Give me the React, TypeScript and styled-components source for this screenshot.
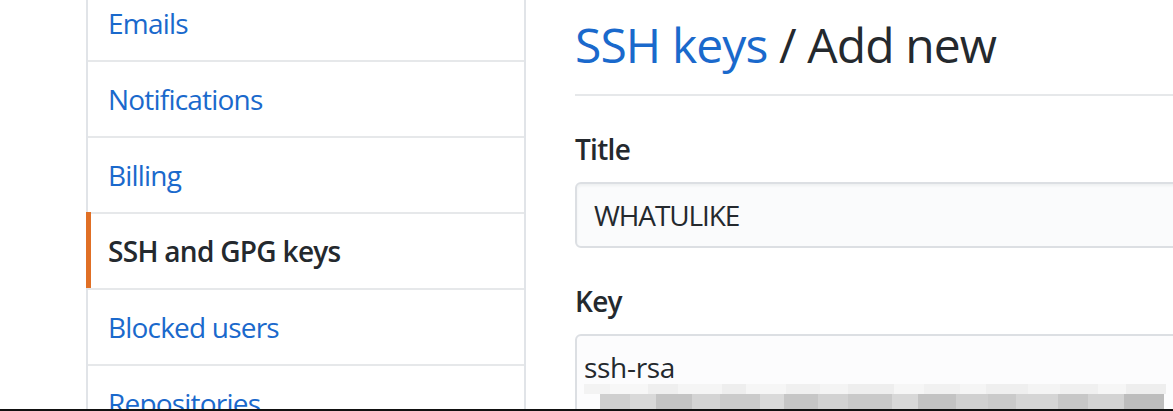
import React from "react";
import styled, { createGlobalStyle } from "styled-components";

const GlobalStyle = createGlobalStyle`
  html, body {
    margin: 0;
    padding: 0;
    background: #ffffff;
  }
  body {
    font-family: "Open Sans", "Noto Sans", "Liberation Sans", sans-serif;
    color: #24292e;
  }
  * { box-sizing: border-box; }
`;

const Page = styled.div`
  height: 411px;
  display: flex;
  flex-direction: column;
  overflow: hidden;
  background: #ffffff;
`;

const Content = styled.div`
  flex: 1;
  min-height: 0;
  display: flex;
  align-items: flex-start;
  padding-left: 86px;
  overflow: hidden;
`;

const BottomRule = styled.div`
  height: 2px;
  flex-shrink: 0;
  background: #111111;
`;

const Sidebar = styled.nav`
  flex-shrink: 0;
  width: 440px;
  margin-top: -16px;
  border-left: 2px solid #e1e4e8;
  border-right: 2px solid #e1e4e8;
  display: flex;
  flex-direction: column;
`;

const MenuItem = styled.a<{ $active?: boolean }>`
  position: relative;
  display: flex;
  align-items: center;
  height: 76px;
  padding-left: 20px;
  border-top: 2px solid #e6e8ea;
  font-size: 28px;
  letter-spacing: ${(p) => (p.$active ? "-0.7px" : "-0.8px")};
  font-weight: ${(p) => (p.$active ? 600 : 400)};
  color: ${(p) => (p.$active ? "#24292e" : "#1a69cc")};
  text-decoration: none;
  cursor: pointer;

  ${(p) =>
    p.$active &&
    `
    &::before {
      content: "";
      position: absolute;
      left: -2px;
      top: -2px;
      bottom: 0;
      width: 5px;
      background: #e06f25;
    }
  `}
`;

const Main = styled.main`
  flex-shrink: 0;
  width: 760px;
  margin-left: 49px;
  display: flex;
  flex-direction: column;
`;

const Subhead = styled.div`
  padding-top: 15px;
  padding-bottom: 19px;
  border-bottom: 2px solid #e6e8ea;
`;

const Heading = styled.h2`
  margin: 0;
  font-size: 48px;
  line-height: 60px;
  font-weight: 400;
  letter-spacing: -0.9px;
  color: #24292e;
`;

const HeadLink = styled.a`
  color: #1a69cc;
  text-decoration: none;
`;

const Form = styled.form`
  display: flex;
  flex-direction: column;
  padding-top: 32px;
`;

const Group = styled.div`
  display: flex;
  flex-direction: column;
  & + & {
    margin-top: 32px;
  }
`;

const Label = styled.label`
  font-size: 28px;
  line-height: 42px;
  font-weight: 600;
  letter-spacing: -0.7px;
  margin-bottom: 12px;
  color: #24292e;
`;

const Field = styled.div`
  height: 66px;
  border: 2px solid #dcdfe3;
  border-radius: 6px;
  background: #fafbfc;
  padding: 10px 17px;
  font-size: 28px;
  line-height: 42px;
  letter-spacing: -1.1px;
  color: #24292e;
  box-shadow: inset 0 2px 3px rgba(27, 31, 35, 0.05);
`;

const KeyField = styled.div`
  height: 120px;
  border: 2px solid #dcdfe3;
  border-radius: 6px;
  background: #fcfcfd;
  padding: 10px 0 0 7px;
  font-size: 28px;
  line-height: 42px;
  letter-spacing: -0.3px;
  color: #24292e;
  overflow: hidden;
`;

const KeyLine = styled.div`
  padding-left: 0;
`;

const RedactRow = styled.div<{ $h: number; $offset: number; $lift?: number }>`
  display: flex;
  height: ${(p) => p.$h}px;
  padding-left: ${(p) => p.$offset}px;
  margin-top: ${(p) => -(p.$lift ?? 0)}px;
`;

const Block = styled.span`
  flex-shrink: 0;
  height: 100%;
`;

const faint = [
  [26, "#f3f3f3"], [38, "#f7f7f7"], [30, "#efefef"], [44, "#f5f5f5"], [24, "#eeeeee"],
  [40, "#f6f6f6"], [34, "#f0f0f0"], [28, "#f4f4f4"], [46, "#eeeeee"], [30, "#f6f6f6"],
  [36, "#f1f1f1"], [26, "#f5f5f5"], [42, "#efefef"], [32, "#f4f4f4"], [38, "#f0f0f0"],
  [28, "#f6f6f6"], [40, "#eeeeee"],
] as const;

const dark = [
  [30, "#cfcfcf"], [26, "#d9d9d9"], [36, "#c4c4c4"], [28, "#d4d4d4"], [40, "#cbcbcb"],
  [24, "#dadada"], [34, "#c6c6c6"], [30, "#d2d2d2"], [44, "#c9c9c9"], [26, "#d8d8d8"],
  [38, "#c3c3c3"], [32, "#d0d0d0"], [28, "#cacaca"], [42, "#d5d5d5"], [30, "#c7c7c7"],
  [36, "#d3d3d3"], [40, "#bdbdbd"],
] as const;

const menu = [
  { label: "Emails" },
  { label: "Notifications" },
  { label: "Billing" },
  { label: "SSH and GPG keys", active: true },
  { label: "Blocked users" },
  { label: "Repositories" },
];

export default function App() {
  return (
    <>
      <GlobalStyle />
      <Page>
        <Content>
          <Sidebar>
            {menu.map((m) => (
              <MenuItem key={m.label} $active={m.active}>
                {m.label}
              </MenuItem>
            ))}
          </Sidebar>
          <Main>
            <Subhead>
              <Heading>
                <HeadLink>SSH keys</HeadLink> / Add new
              </Heading>
            </Subhead>
            <Form>
              <Group>
                <Label>Title</Label>
                <Field>WHATULIKE</Field>
              </Group>
              <Group>
                <Label>Key</Label>
                <KeyField>
                  <KeyLine>ssh-rsa</KeyLine>
                  <RedactRow $h={10} $offset={0} $lift={4}>
                    {faint.map(([w, c], i) => (
                      <Block key={i} style={{ width: w, background: c }} />
                    ))}
                  </RedactRow>
                  <RedactRow $h={20} $offset={16}>
                    {dark.map(([w, c], i) => (
                      <Block key={i} style={{ width: w, background: c }} />
                    ))}
                  </RedactRow>
                </KeyField>
              </Group>
            </Form>
          </Main>
        </Content>
        <BottomRule />
      </Page>
    </>
  );
}
